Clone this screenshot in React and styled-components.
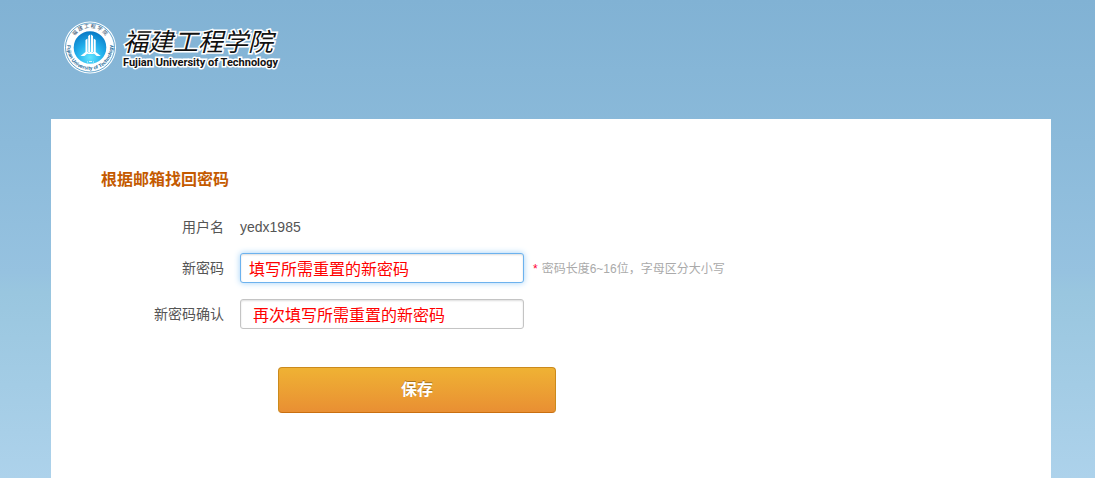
import React, { useState } from 'react'
import styled, { createGlobalStyle } from 'styled-components'


const GlobalStyle = createGlobalStyle`
    body {
        margin: 0;
        font-family: "Liberation Sans", "Noto Sans CJK SC", sans-serif;
        font-size: 14px;
        color: #555;
    }
`;

const Page = styled.div`
    display: flex;
    flex-direction: column;
    box-sizing: border-box;
    min-height: 100vh;
    padding: 0 44px 0 51px;
    background: linear-gradient(#81b2d4 0%, #8bbada 30%, #96c2e0 57%, #99c6df 61%, #add2eb 100%);
`;

const Header = styled.header`
    height: 119px;
    padding: 21px 12px 0;
    box-sizing: border-box;
`;

const Brand = styled.a`
    display: inline-flex;
    gap: 6px;
    color: #111;
    text-decoration: none;
`;

const Seal = styled.svg`
    width: 54px;
    height: 54px;
`;

const BrandNames = styled.span`
    display: flex;
    flex-direction: column;
    gap: 2px;
    padding-top: 5px;
    white-space: nowrap;
    -webkit-text-stroke: 3px #fff;
    paint-order: stroke fill;
`;

const ChineseName = styled.span`
    font-family: "Noto Sans CJK SC", sans-serif;
    font-size: 25px;
    font-style: italic;
    line-height: 28px;
`;

const EnglishName = styled.span`
    font-family: Roboto, sans-serif;
    font-size: 11px;
    font-weight: 700;
    line-height: 14px;
`;

const Panel = styled.main`
    flex: 1;
    padding: 49px 50px;
    background: #fff;
`;

const Title = styled.h1`
    margin: 0 0 25px;
    color: #c45a00;
    font-size: 16px;
    font-weight: 700;
    line-height: 24px;
`;

const Form = styled.form`
    display: flex;
    flex-direction: column;
    gap: 16px;
`;

const Row = styled.div`
    display: grid;
    grid-template-columns: 123px 284px auto;
    align-items: ${props => props.$short ? 'baseline' : 'center'};
    column-gap: 16px;
    height: ${props => props.$short ? 20 : 30}px;
`;

const Label = styled.label`
    line-height: 20px;
    text-align: right;
    white-space: nowrap;
`;

const UserName = styled.output`
    color: #555;
`;

const Input = styled.input`
    box-sizing: border-box;
    width: 100%;
    height: 30px;
    padding: 0 ${props => props.$indent}px;
    border: 1px solid ${props => props.$active ? '#6cb2ee' : '#c4c4c4'};
    border-radius: 3px;
    outline: none;
    background: #fff;
    box-shadow: inset 0 1px 2px #ddd${props => props.$active ? ', 0 0 6px #9fd0f7' : ''};
    color: #f00;
    font: 16px "Liberation Sans", "Noto Sans CJK SC", sans-serif;
`;

const Hint = styled.span`
    margin-left: -7px;
    padding-bottom: 2px;
    color: #aaa;
    font-size: 12px;
    white-space: nowrap;
`;

const Star = styled.span`
    margin-right: 4px;
    color: #f03;
`;

const SaveButton = styled.button`
    width: 278px;
    height: 46px;
    margin: 22px 0 0 177px;
    padding: 0 0 4px;
    border: 1px solid #cb8a1c;
    border-bottom-color: #c96f10;
    border-radius: 4px;
    background: linear-gradient(#efb234, #e98f33);
    color: #fff;
    font: bold 16px "Liberation Sans", "Noto Sans CJK SC", sans-serif;
    text-shadow: 0 -1px 0 #a87420;
    cursor: pointer;
`;

const SchoolSeal = () => {
    return (
        <Seal viewBox="0 0 54 54" aria-hidden="true">
            <defs>
                <radialGradient id="sealBlue" cx="50%" cy="80%" r="80%">
                    <stop offset="0" stopColor="#62e4ff" />
                    <stop offset="0.5" stopColor="#22b0ec" />
                    <stop offset="1" stopColor="#0878c4" />
                </radialGradient>
                <path id="sealTop" d="M8 26a19 19 0 0 1 38 0" />
                <path id="sealBottom" d="M5 20a22.800 22.800 0 1 0 44 0" />
            </defs>
            <circle cx="27" cy="26.500" r="26" fill="#fff" />
            <circle cx="27" cy="26.500" r="24.500" fill="none" stroke="#3d8fc2" strokeWidth="0.8" />
            <circle cx="27" cy="26.500" r="16.300" fill="url(#sealBlue)" />
            <text fontFamily="Noto Sans CJK SC, sans-serif" fontSize="5" fill="#123a5c">
                <textPath href="#sealTop" startOffset="50%" textAnchor="middle">福 建 工 程 学 院</textPath>
            </text>
            <text fontFamily="Liberation Sans, sans-serif" fontSize="5" fontWeight="bold" fill="#246a98">
                <textPath href="#sealBottom" startOffset="50%" textAnchor="middle">Fujian University of Technology</textPath>
            </text>
            {/* towers */}
            <path d="M25.200 31V15l2-1.500v17.500zM28 31V13.500l2 1.500v16zM22.500 31V19l2-1.500V31zM30.700 31V17.500l2 1.500v12z" fill="#fff" />
            {/* steps spreading out under the towers */}
            <path d="M22.500 31h3.500l-4.500 4h-4zM29.200 31h3.500l5 4h-4zM26.800 31h1.600l3 2h-7.600z" fill="#fff" />
            <path d="M24 41h1M26 40.500h3M30 41h1" stroke="#d8f7ff" strokeWidth="1" />
        </Seal>
    )
}

const App = () => {
    const [password, setPassword] = useState('填写所需重置的新密码')
    const [confirm, setConfirm] = useState('再次填写所需重置的新密码')

    return (
        <Page>
            <GlobalStyle />
            <Header>
                <Brand href="#">
                    <SchoolSeal />
                    <BrandNames>
                        <ChineseName>福建工程学院</ChineseName>
                        <EnglishName>Fujian University of Technology</EnglishName>
                    </BrandNames>
                </Brand>
            </Header>
            <Panel>
                <Title>根据邮箱找回密码</Title>
                <Form onSubmit={e => e.preventDefault()}>
                    <Row $short>
                        <Label htmlFor="username">用户名</Label>
                        <UserName id="username">yedx1985</UserName>
                    </Row>
                    <Row>
                        <Label htmlFor="password">新密码</Label>
                        <Input id="password" type="text" $active $indent={8} value={password} onChange={e => setPassword(e.target.value)} />
                        <Hint><Star>*</Star>密码长度6~16位，字母区分大小写</Hint>
                    </Row>
                    <Row>
                        <Label htmlFor="confirm">新密码确认</Label>
                        <Input id="confirm" type="text" $indent={12} value={confirm} onChange={e => setConfirm(e.target.value)} />
                    </Row>
                    <SaveButton type="submit">保存</SaveButton>
                </Form>
            </Panel>
        </Page>
    )
}

export default App
